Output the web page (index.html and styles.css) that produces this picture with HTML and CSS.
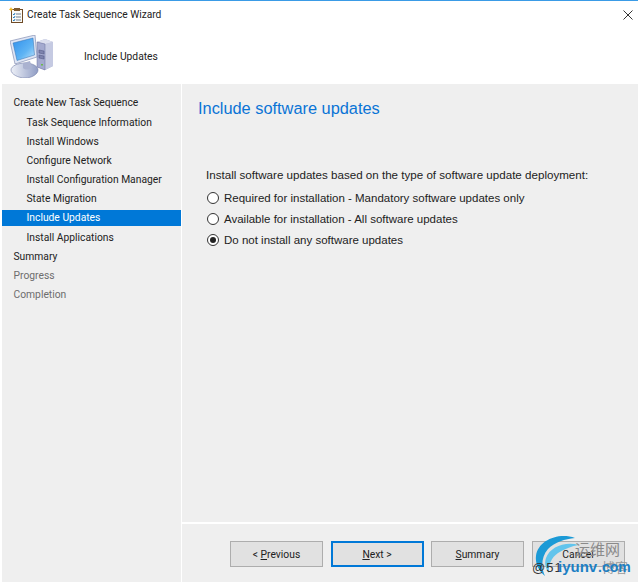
FILE: index.html
```html
<!DOCTYPE html>
<html lang="en">
<head>
<meta charset="utf-8">
<title>Create Task Sequence Wizard</title>
<link rel="stylesheet" href="styles.css">
</head>
<body>
<div class="window">
  <div class="titlebar">
    <svg class="title-icon" width="15" height="16" viewBox="0 0 15 16">
      <rect x="2.5" y="2.5" width="11" height="13" fill="#fbfaf6" stroke="#6e4a26"/>
      <rect x="5" y="1" width="6" height="3" fill="#7d5a30"/>
      <path d="M7 7h5M7 10h5M7 13h5" stroke="#6f7f90"/>
      <path d="M4 7l1 1 1-2M4 10l1 1 1-2M4 13l1 1 1-2" stroke="#2a7fc0" fill="none"/>
      <path d="M2 0l.7 1.6L4.4 2.3 2.8 3 2 4.8 1.2 3 -.4 2.3 1.3 1.6z" fill="#f2b820"/>
    </svg>
    <span class="title-text">Create Task Sequence Wizard</span>
    <svg class="close-icon" width="10" height="10" viewBox="0 0 10 10"><path d="M.5.5l9 9M9.5.5l-9 9" stroke="#333" fill="none"/></svg>
  </div>
  <div class="banner">
    <svg class="computer" width="44" height="43" viewBox="0 0 44 43">
      <defs>
        <linearGradient id="screen" x1="0" y1="0" x2="1" y2="1">
          <stop offset="0" stop-color="#2f90ec"/>
          <stop offset=".6" stop-color="#5fb4f4"/>
          <stop offset="1" stop-color="#c0e4fb"/>
        </linearGradient>
        <linearGradient id="base" x1="0" y1="0" x2="1" y2="0">
          <stop offset="0" stop-color="#eef1f8"/>
          <stop offset="1" stop-color="#8f9cc4"/>
        </linearGradient>
      </defs>
      <path d="M27 7l8-3 8 3v24l-8 4-8-3z" fill="#a9afcf"/>
      <path d="M35 9l8-2v24l-8 4z" fill="#c5cae2"/>
      <path d="M27 7l8-3 8 3-8 2z" fill="#dcdfee"/>
      <path d="M27 7l8 2v26l-8-3z" fill="#a4aacf" stroke="#6a719e" stroke-width=".5"/>
      <path d="M29 15l5 1v3l-5-1zM29 20l5 1v3l-5-1z" fill="#7d83ad" stroke="#4f5580" stroke-width=".5"/>
      <rect x="31" y="29" width="2" height="1.500" fill="#6dbb4a"/>
      <path d="M1 35c0-4 7-7 14-7s13 3 13 7-6 8-13 8S1 39 1 35z" fill="url(#base)" stroke="#6f7ba6" stroke-width=".6"/>
      <path d="M13 28l7-2 2 7c-3 2-7 2-9 0z" fill="#aab2d0"/>
      <path d="M0 6L25 0l2 22-22 7z" fill="#dfe6f5" stroke="#7480a8" stroke-width=".6"/>
      <path d="M3 8l20-5 1.500 17L7 25.500z" fill="url(#screen)" stroke="#3470b0" stroke-width=".5"/>
    </svg>
    <span class="banner-text">Include Updates</span>
  </div>
  <div class="main">
    <nav class="nav">
      <div class="nav-item">Create New Task Sequence</div>
      <div class="nav-item sub">Task Sequence Information</div>
      <div class="nav-item sub">Install Windows</div>
      <div class="nav-item sub">Configure Network</div>
      <div class="nav-item sub">Install Configuration Manager</div>
      <div class="nav-item sub">State Migration</div>
      <div class="nav-item sub active">Include Updates</div>
      <div class="nav-item sub">Install Applications</div>
      <div class="nav-item">Summary</div>
      <div class="nav-item muted">Progress</div>
      <div class="nav-item muted">Completion</div>
    </nav>
    <div class="pane">
      <section class="content">
        <h1 class="heading">Include software updates</h1>
        <p class="intro">Install software updates based on the type of software update deployment:</p>
        <div class="options">
          <div class="option"><span class="radio"></span>Required for installation - Mandatory software updates only</div>
          <div class="option"><span class="radio"></span>Available for installation - All software updates</div>
          <div class="option"><span class="radio checked"></span>Do not install any software updates</div>
        </div>
      </section>
      <footer class="footer">
        <div class="btn"><span>&lt; <u>P</u>revious</span></div>
        <div class="btn primary"><span><u>N</u>ext &gt;</span></div>
        <div class="btn"><span><u>S</u>ummary</span></div>
        <div class="btn"><span>Cancel</span></div>
      </footer>
    </div>
  </div>
  <div class="watermark">
    <svg class="wm-swirl" width="46" height="42" viewBox="0 0 46 42">
      <path d="M40 3C24-3 3 5 1 21c-1 8 3 15 9 20C6 33 6 22 13 14 20 7 30 4 40 3z" fill="#1c9ad6"/>
      <path d="M44 10C30 6 15 12 11 23c-2 6 0 11 3 15-1-8 2-15 9-20 6-4 14-7 21-8z" fill="#62c4ec"/>
    </svg>
    <span class="wm-cn">运维网</span>
    <span class="wm-cn2">博客</span>
    <span class="wm-at">@51</span><span class="wm-blue">iyunv</span><span class="wm-dark">.com</span>
  </div>
</div>
</body>
</html>
```
FILE: styles.css
```css
* { box-sizing: border-box; }
html, body { margin: 0; padding: 0; }
body { width: 638px; height: 582px; overflow: hidden; background: #fff; font-family: Roboto, sans-serif; color: #222; }
.window { position: relative; width: 638px; height: 582px; display: flex; flex-direction: column; background: #fff; border-top: 1px solid #3a9be6; }
.titlebar { height: 27px; display: flex; align-items: center; padding-left: 9px; font-size: 10.2px; flex: none; }
.title-icon { margin-right: 3px; }
.title-text { flex: 1; }
.close-icon { margin-right: 5px; }
.banner { height: 56px; flex: none; display: flex; align-items: center; padding-left: 10px; font-size: 10.3px; }
.computer { margin-right: 30px; }
.main { flex: 1; display: flex; padding-left: 2px; min-height: 0; }
.nav { width: 179px; flex: none; background: #efefef; padding-top: 9.4px; font-size: 10.3px; }
.nav-item { height: 19.2px; line-height: 19px; padding-left: 11.5px; white-space: nowrap; }
.nav-item.sub { padding-left: 24.5px; }
.nav-item.active { background: #0078d7; color: #fff; height: 16px; line-height: 16px; margin: 1px 0 2.2px; }
.nav-item.muted { color: #6d6d6d; }
.pane { flex: 1; margin-left: 1px; display: flex; flex-direction: column; min-width: 0; }
.content { flex: 1; background: #efefef; padding: 14px 16px 0 16px; }
.heading { margin: 0; font-family: "Liberation Sans", sans-serif; font-weight: 400; font-size: 16.35px; line-height: 20px; color: #0a74d6; }
.intro { margin: 49px 0 0 8px; font-family: "Liberation Sans", sans-serif; font-size: 11.6px; line-height: 16px; white-space: nowrap; }
.options { margin: 7px 0 0 8px; font-family: "Liberation Sans", sans-serif; font-size: 11.5px; display: flex; flex-direction: column; gap: 5px; }
.option { display: flex; align-items: center; height: 16px; white-space: nowrap; }
.radio { width: 12px; height: 12px; margin: 0 5px 0 1px; border: 1px solid #333; border-radius: 50%; background: #fff; flex: none; display: flex; align-items: center; justify-content: center; }
.radio.checked::after { content: ""; width: 6px; height: 6px; border-radius: 50%; background: #222; }
.footer { height: 59px; flex: none; margin-top: 1px; background: #efefef; border-top: 1px solid #fff; display: flex; gap: 7.5px; padding: 17px 0 0 48px; }
.btn { width: 93px; height: 26px; background: #e1e1e1; border: 1px solid #adadad; display: flex; align-items: center; justify-content: center; font-size: 10.3px; white-space: pre; }
.btn.primary { border: 2px solid #0078d7; }
.watermark { position: absolute; left: 532px; top: 534px; width: 106px; height: 47px; }
.wm-swirl { position: absolute; left: 3px; top: 0; }
.wm-cn { position: absolute; left: 43px; top: 5px; font-family: "Noto Sans CJK SC", sans-serif; font-size: 15px; line-height: 18px; color: #8a8a8a; }
.wm-cn2 { position: absolute; left: 70px; top: 24px; font-family: "Noto Sans CJK SC", sans-serif; font-size: 13px; line-height: 16px; color: #9a9a9a; }
.wm-at { position: absolute; left: 0; top: 24px; font-family: "Liberation Sans", sans-serif; font-size: 13px; line-height: 18px; letter-spacing: 1px; color: #333; }
.wm-blue { position: absolute; left: 26px; top: 23px; font-family: "Liberation Sans", sans-serif; font-weight: 700; font-size: 15px; line-height: 18px; color: #1c7fc4; }
.wm-dark { position: absolute; left: 66px; top: 23px; font-family: "Liberation Sans", sans-serif; font-weight: 700; font-size: 14px; line-height: 18px; color: #1c7fc4; }
```
